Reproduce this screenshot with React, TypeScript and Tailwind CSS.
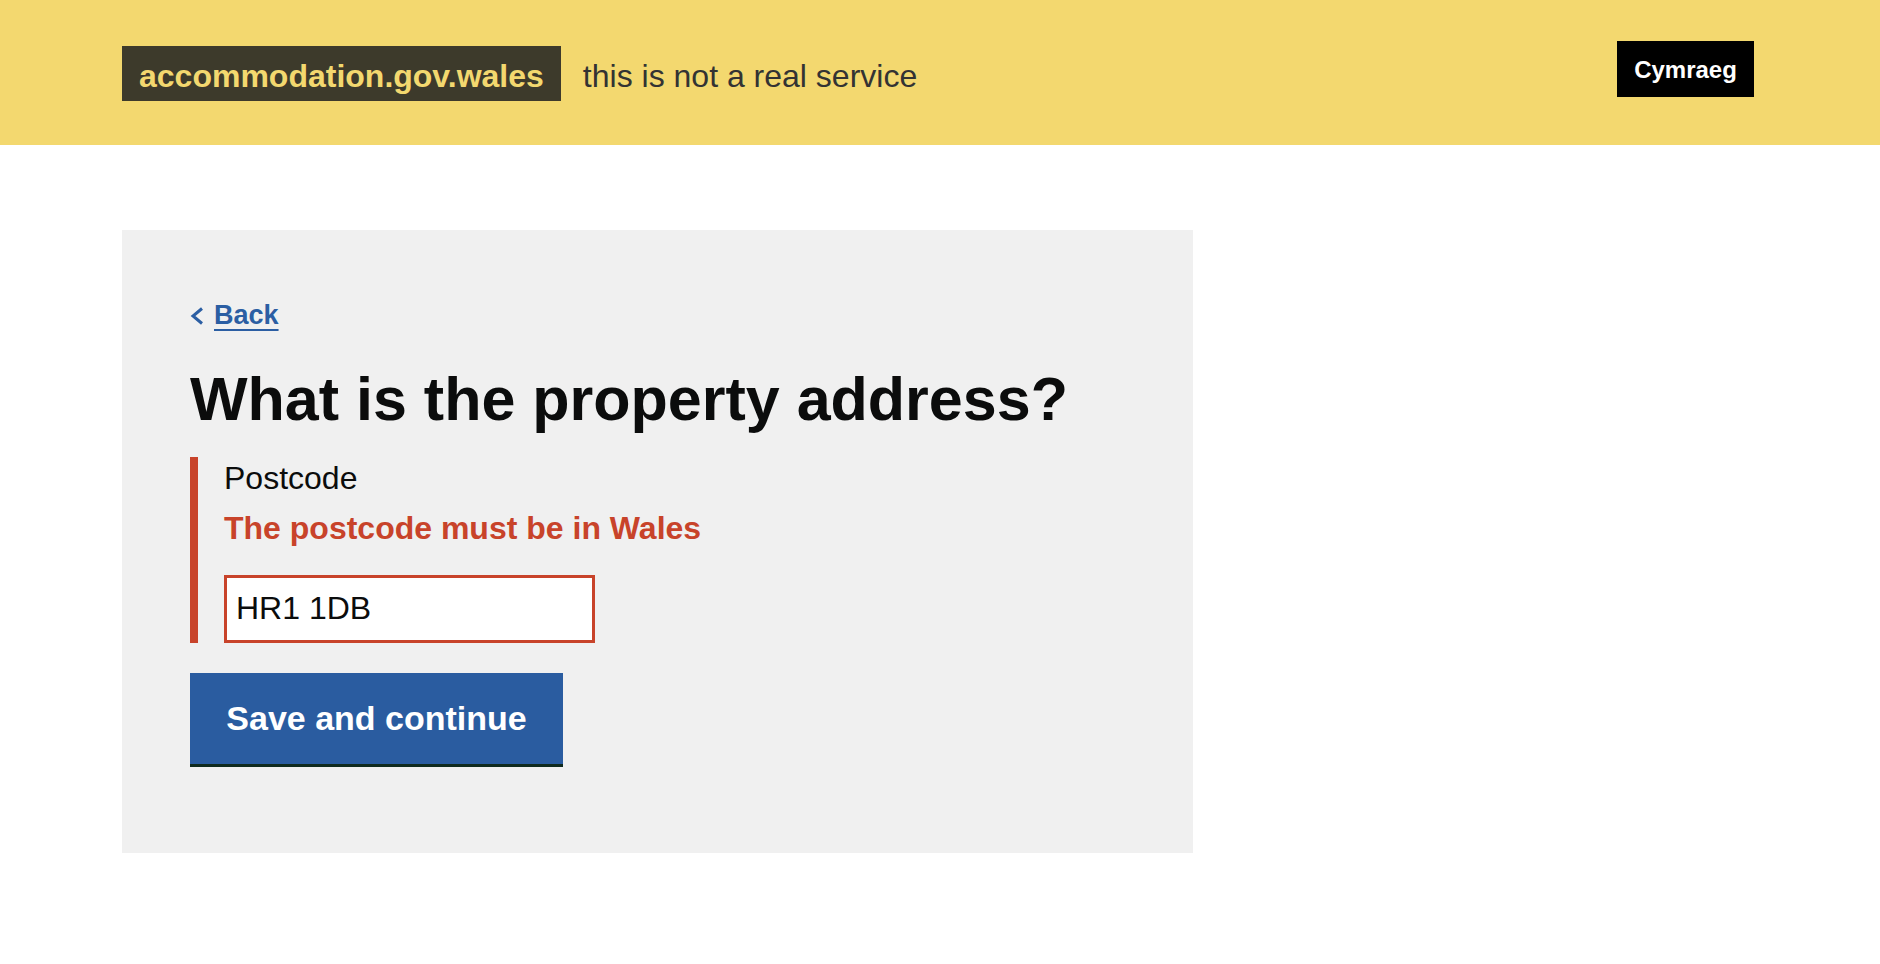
export default function App() {
    return (
        <div className="min-h-screen bg-white" style={{ fontFamily: '"Liberation Sans", Arial, sans-serif' }}>
            {/* top bar */}
            <header className="h-[145px] bg-[#f3d86f] flex items-start justify-between pl-[122px] pr-[126px]">
                <div className="flex items-center mt-[46px]">
                    <a href="#" className="h-[55px] px-[17px] pt-[4px] bg-[#3d3a2b] text-[#f3d86f] text-[32px] font-bold leading-none flex items-center">
                        accommodation.gov.wales
                    </a>
                    <span className="ml-[22px] pt-[4px] text-[32px] leading-none text-[#333333]">this is not a real service</span>
                </div>
                <button type="button" className="mt-[41px] h-[56px] w-[137px] pt-[2px] bg-black text-white text-[24px] font-bold leading-none flex items-center justify-center">
                    Cymraeg
                </button>
            </header>

            <main className="pl-[122px] pt-[85px]">
                <div className="w-[1071px] bg-[#f0f0f0] pl-[68px] pt-[72px] pb-[89px]">
                    <a href="#" className="inline-flex items-center text-[#2b5ea3] text-[27px] font-bold leading-none">
                        <svg className="w-[14px] h-[18px] mr-[10px]" viewBox="0 0 14 18" fill="none">
                            <path d="M12 1.5L3 9l9 7.5" stroke="currentColor" strokeWidth="3" />
                        </svg>
                        <span className="underline decoration-2 underline-offset-[5px]">Back</span>
                    </a>

                    <h1 className="mt-[37px] text-[61px] font-bold leading-none text-[#0b0c0c]">What is the property address?</h1>

                    <div className="mt-[27px] border-l-[8px] border-[#c8432a] pl-[26px] pt-[5px]">
                        <label className="block text-[32px] leading-none text-[#0b0c0c]">Postcode</label>
                        <p className="mt-[18px] text-[32px] font-bold leading-none text-[#c8432a]">The postcode must be in Wales</p>
                        <input
                            defaultValue="HR1 1DB"
                            className="mt-[31px] block w-[371px] h-[68px] border-[3px] border-[#c8432a] bg-white px-[9px] text-[32px] text-[#0b0c0c] outline-none"
                        />
                    </div>

                    <button type="button" className="mt-[30px] w-[373px] h-[91px] bg-[#2a5ca0] text-white text-[34px] font-bold leading-none shadow-[0_3px_0_#0f2a1e] flex items-center justify-center">
                        Save and continue
                    </button>
                </div>
            </main>
        </div>
    )
}
